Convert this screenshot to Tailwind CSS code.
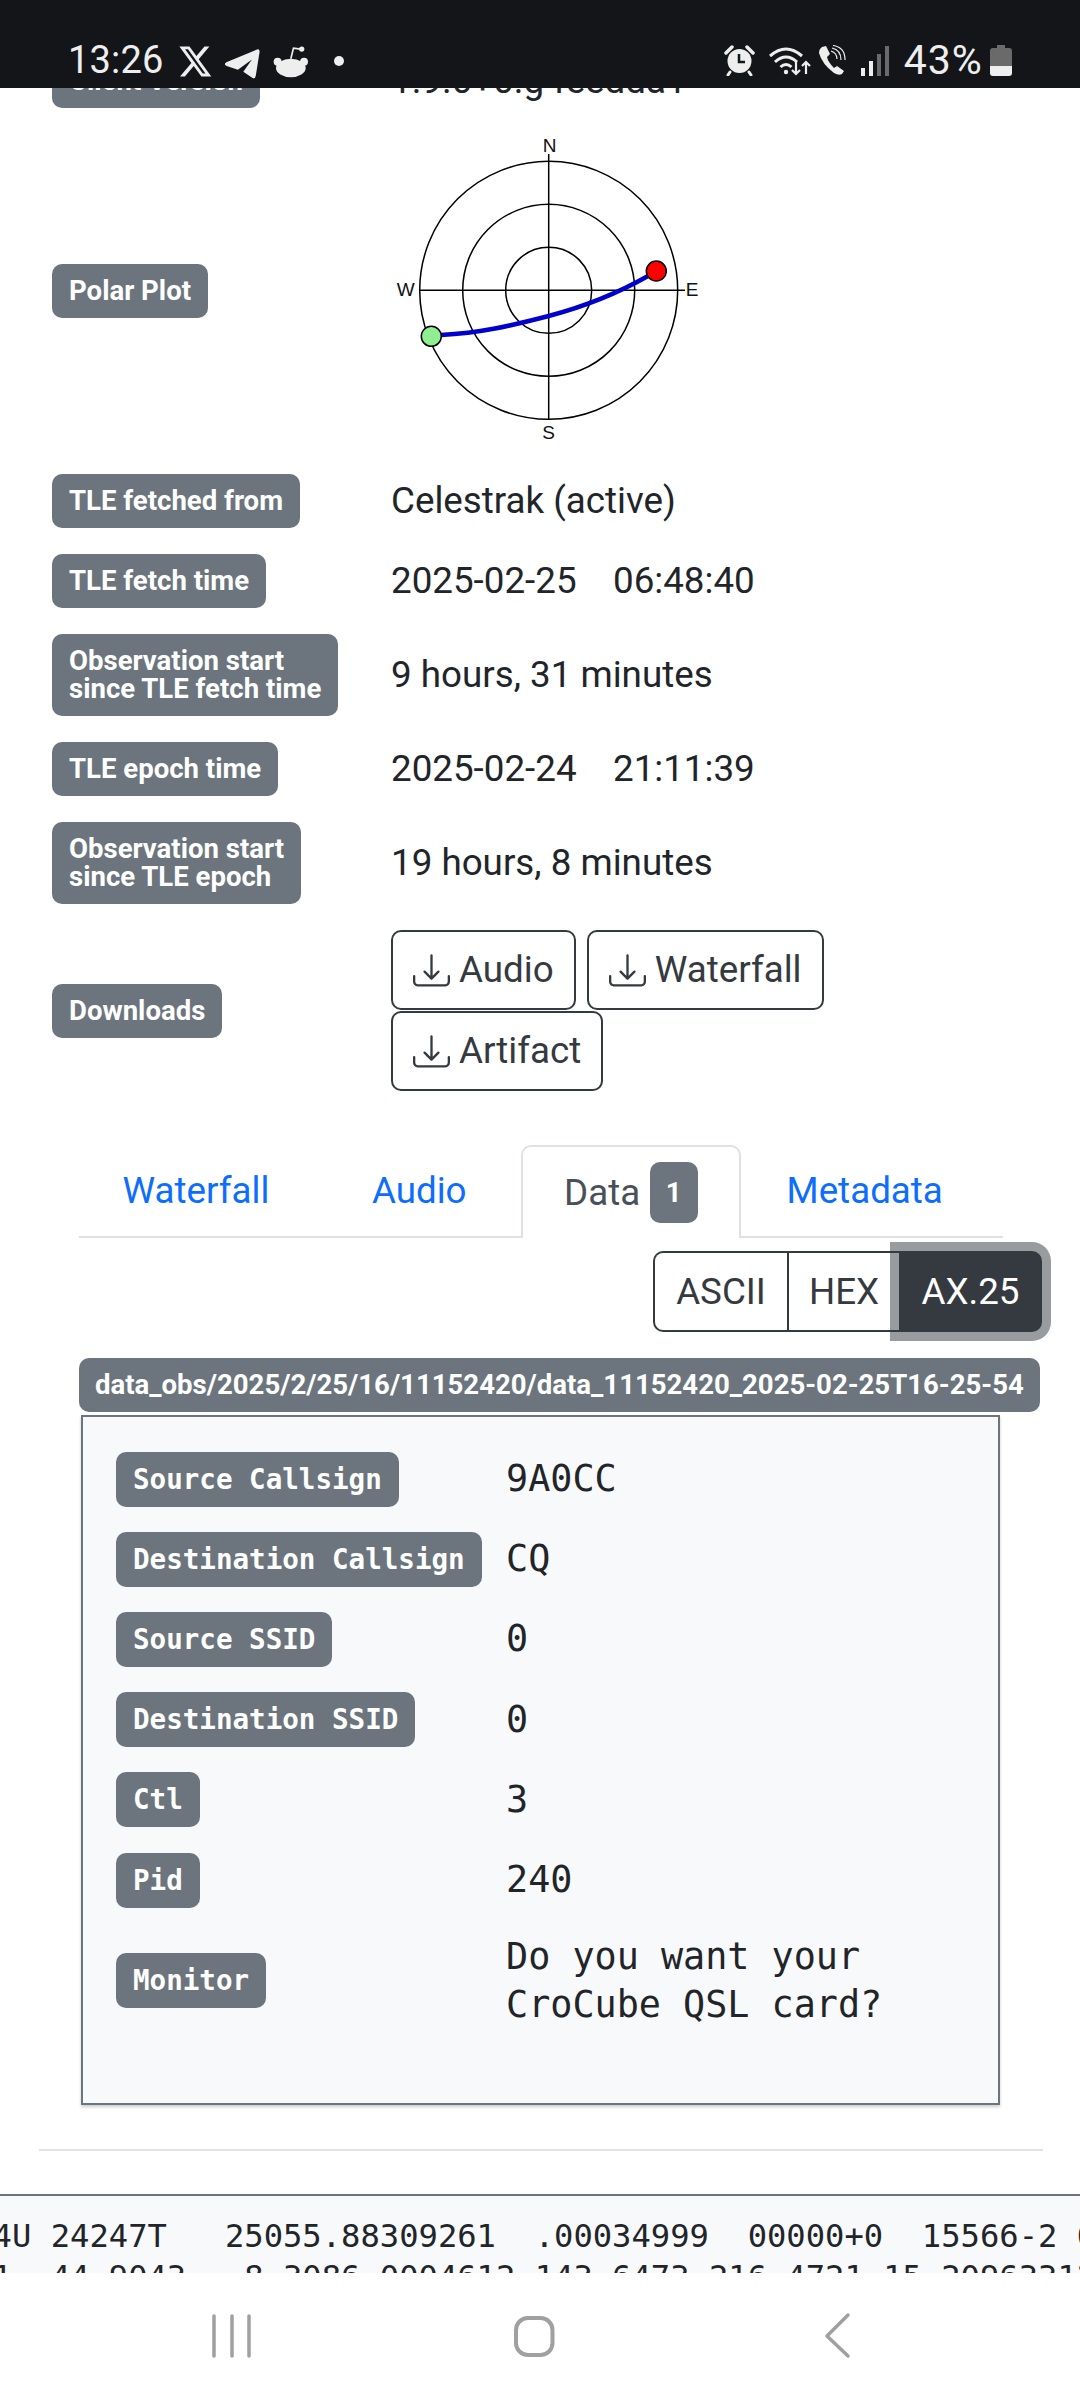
<!DOCTYPE html>
<html lang="en">
<head>
    <meta charset="UTF-8">
    <meta name="viewport" content="width=device-width, initial-scale=1.0">
    <title>Observation</title>
    <script src="https://cdn.jsdelivr.net/npm/@tailwindcss/browser@4"></script>
</head>
<body class="bg-white text-[#212529] font-['Roboto',sans-serif]">
<div class="w-[1080px] h-[2400px] flex flex-col overflow-hidden">

    <!-- Status bar -->
    <div class="relative z-10 h-[88px] shrink-0 bg-[#131519] text-[#eeeeee] flex items-start">
        <span class="ml-[68px] mt-[38px] text-[38px] leading-[44px] tracking-[0.2px]">13:26</span>
        <svg class="ml-[15px] mt-[46px] w-[34px] h-[31px]" viewBox="1 2 23 20" preserveAspectRatio="none" fill="#eeeeee"><path d="M18.244 2.25h3.308l-7.227 8.26 8.502 11.24H16.17l-5.214-6.817L4.99 21.75H1.68l7.73-8.835L1.254 2.25H8.08l4.713 6.231zm-1.161 17.52h1.833L7.084 4.126H5.117z"/></svg>
        <svg class="ml-[11px] mt-[47px] w-[37px] h-[32px]" viewBox="525 45 115 100" fill="#eeeeee"><path d="M630 52 L532 93 Q522 100 533 104 L568 116 L612 84 L585 122 L614 142 Q622 146 624 135 L636 60 Q636 50 630 52 Z"/></svg>
        <svg class="ml-[11px] mt-[44px] w-[38px] h-[35px]" viewBox="665 40 115 105" fill="#eeeeee"><ellipse cx="722" cy="112" rx="45" ry="28"/><circle cx="682" cy="93" r="12"/><circle cx="762" cy="93" r="12"/><path d="M722 84 L730 52 L752 55" fill="none" stroke="#eeeeee" stroke-width="5"/><circle cx="755" cy="55" r="8"/></svg>
        <span class="ml-[24px] mt-[56px] w-[10px] h-[10px] rounded-full bg-[#eeeeee]"></span>

        <svg class="ml-[380px] mt-[45px] w-[31px] h-[31px]" viewBox="0 0 31 31"><circle cx="15.500" cy="16" r="12" fill="#eeeeee"/><path d="M2 8 L8 2 M29 8 L23 2" stroke="#eeeeee" stroke-width="3.500" stroke-linecap="round"/><path d="M6 27 L4 30 M25 27 L27 30" stroke="#eeeeee" stroke-width="3" stroke-linecap="round"/><path d="M15 9 V17 H21" fill="none" stroke="#131519" stroke-width="2.500"/></svg>
        <svg class="ml-[13px] mt-[46px] w-[44px] h-[30px]" viewBox="0 0 44 30" fill="none" stroke="#eeeeee"><path d="M2 10 Q18 -4 34 10" stroke-width="3"/><path d="M7 16 Q18 6 29 16" stroke-width="3"/><path d="M12.500 21 Q18 16 23.500 21" stroke-width="3"/><circle cx="18" cy="26" r="2.200" fill="#eeeeee" stroke="none"/><path d="M28 15 V28 M24 24 L28 28 L32 24" stroke-width="2.200"/><path d="M38 28 V16 M34 20 L38 16 L42 20" stroke-width="2.200"/></svg>
        <svg class="ml-[5px] mt-[45px] w-[30px] h-[31px]" viewBox="0 0 30 31"><path d="M5 2 L9 1 L13 9 L10 12 Q11 17 17 23 L20 21 L27 26 L25 29 Q22 31 17 28 Q5 19 2 8 Q2 4 5 2 Z" fill="#eeeeee"/><path d="M15 3 Q24 5 24 15 M16 0.500 Q28 2 28 15 M14 6 Q20 8 20 14" fill="none" stroke="#eeeeee" stroke-width="1.200"/></svg>
        <svg class="ml-[14px] mt-[46px] w-[29px] h-[30px]" viewBox="0 0 29 30"><rect x="0" y="22" width="4" height="8" fill="#eeeeee"/><rect x="8" y="15" width="4" height="15" fill="#eeeeee"/><rect x="16" y="8" width="4" height="22" fill="#6a6a6a"/><rect x="24" y="0" width="4" height="30" fill="#6a6a6a"/></svg>
        <span class="ml-[14px] mt-[38px] text-[41px] leading-[44px] tracking-[1px]">43%</span>
        <svg class="ml-[7px] mt-[45px] w-[22px] h-[31px]" viewBox="0 0 22 31"><path d="M7 0 H15 V3 H19 Q22 3 22 6 V21 H0 V6 Q0 3 3 3 H7 Z" fill="#6a6a6a"/><path d="M0 21 H22 V28 Q22 31 19 31 H3 Q0 31 0 28 Z" fill="#eeeeee"/></svg>
    </div>

    <!-- Page -->
    <div class="flex-1 min-h-0 overflow-hidden">
        <div class="mt-[-47px]">
            <dl class="px-[52px] grid grid-cols-[339px_1fr] items-center">
                <div class="col-span-2 grid grid-cols-subgrid items-center py-[13px]">
                    <dt class="justify-self-start bg-[#6c757d] text-white font-bold text-[27.560px] leading-[28px] px-[17px] py-[13px] rounded-[10px]">Client Version</dt>
                    <dd class="text-[36.750px] leading-[54px]">1.9.0+0.g feedda1</dd>
                </div>
                <div class="col-span-2 grid grid-cols-subgrid items-center h-[340px]">
                    <dt class="justify-self-start bg-[#6c757d] text-white font-bold text-[27.560px] leading-[28px] px-[17px] py-[13px] rounded-[10px]">Polar Plot</dt>
                    <dd>
                        <svg class="block ml-px w-[340px] h-[340px]" viewBox="392 121 340 340" fill="none" stroke="#000000" stroke-width="1.500">
                            <circle cx="548.700" cy="290.300" r="129"/>
                            <circle cx="548.700" cy="290.300" r="86"/>
                            <circle cx="548.700" cy="290.300" r="43"/>
                            <path d="M419 290.300 H685 M548.700 154 V420"/>
                            <path d="M441 335 C 480 333 510 326 548.700 316 C 590 305 620 292 648 276" stroke="#0000cc" stroke-width="4.500"/>
                            <circle cx="656.300" cy="271" r="10" fill="#ff0000"/>
                            <circle cx="431.300" cy="336.300" r="10" fill="#90ee90"/>
                            <g fill="#111111" stroke="none" font-family="'Liberation Sans',sans-serif" font-size="19" text-anchor="middle">
                                <text x="549.500" y="152">N</text>
                                <text x="405.700" y="296">W</text>
                                <text x="692" y="296">E</text>
                                <text x="548.700" y="439">S</text>
                            </g>
                        </svg>
                    </dd>
                </div>
                <div class="col-span-2 grid grid-cols-subgrid items-center py-[13px]">
                    <dt class="justify-self-start bg-[#6c757d] text-white font-bold text-[27.560px] leading-[28px] px-[17px] py-[13px] rounded-[10px]">TLE fetched from</dt>
                    <dd class="text-[36.750px] leading-[54px]">Celestrak (active)</dd>
                </div>
                <div class="col-span-2 grid grid-cols-subgrid items-center py-[13px]">
                    <dt class="justify-self-start bg-[#6c757d] text-white font-bold text-[27.560px] leading-[28px] px-[17px] py-[13px] rounded-[10px]">TLE fetch time</dt>
                    <dd class="text-[36.750px] leading-[54px] whitespace-pre">2025-02-25    06:48:40</dd>
                </div>
                <div class="col-span-2 grid grid-cols-subgrid items-center py-[13px]">
                    <dt class="justify-self-start bg-[#6c757d] text-white font-bold text-[27.560px] leading-[28px] px-[17px] py-[13px] rounded-[10px]">Observation start<br>since TLE fetch time</dt>
                    <dd class="text-[36.750px] leading-[54px]">9 hours, 31 minutes</dd>
                </div>
                <div class="col-span-2 grid grid-cols-subgrid items-center py-[13px]">
                    <dt class="justify-self-start bg-[#6c757d] text-white font-bold text-[27.560px] leading-[28px] px-[17px] py-[13px] rounded-[10px]">TLE epoch time</dt>
                    <dd class="text-[36.750px] leading-[54px] whitespace-pre">2025-02-24    21:11:39</dd>
                </div>
                <div class="col-span-2 grid grid-cols-subgrid items-center py-[13px]">
                    <dt class="justify-self-start bg-[#6c757d] text-white font-bold text-[27.560px] leading-[28px] px-[17px] py-[13px] rounded-[10px]">Observation start<br>since TLE epoch</dt>
                    <dd class="text-[36.750px] leading-[54px]">19 hours, 8 minutes</dd>
                </div>
                <div class="col-span-2 grid grid-cols-subgrid items-center py-[13px]">
                    <dt class="justify-self-start bg-[#6c757d] text-white font-bold text-[27.560px] leading-[28px] px-[17px] py-[13px] rounded-[10px]">Downloads</dt>
                    <dd class="flex flex-wrap gap-x-[11px] gap-y-px text-[36.750px] leading-[54px] text-[#343a40]">
                        <a class="h-[80px] flex items-center gap-[9px] px-[20px] border-2 border-[#343a40] rounded-[10px]">
                            <svg class="w-[37px] h-[37px]" viewBox="0 0 16 16" fill="#343a40"><path d="M.5 9.900a.5.5 0 0 1 .5.500v2.500a1 1 0 0 0 1 1h12a1 1 0 0 0 1-1v-2.500a.5.5 0 0 1 1 0v2.500a2 2 0 0 1-2 2H2a2 2 0 0 1-2-2v-2.500a.5.5 0 0 1 .5-.5z"/><path d="M7.646 11.854a.5.5 0 0 0 .708 0l3-3a.5.5 0 0 0-.708-.708L8.500 10.293V1.500a.5.5 0 0 0-1 0v8.793L5.354 8.146a.5.5 0 1 0-.708.708l3 3z"/></svg>Audio</a>
                        <a class="h-[80px] flex items-center gap-[9px] px-[20px] border-2 border-[#343a40] rounded-[10px]">
                            <svg class="w-[37px] h-[37px]" viewBox="0 0 16 16" fill="#343a40"><path d="M.5 9.900a.5.5 0 0 1 .5.500v2.500a1 1 0 0 0 1 1h12a1 1 0 0 0 1-1v-2.500a.5.5 0 0 1 1 0v2.500a2 2 0 0 1-2 2H2a2 2 0 0 1-2-2v-2.500a.5.5 0 0 1 .5-.5z"/><path d="M7.646 11.854a.5.5 0 0 0 .708 0l3-3a.5.5 0 0 0-.708-.708L8.500 10.293V1.500a.5.5 0 0 0-1 0v8.793L5.354 8.146a.5.5 0 1 0-.708.708l3 3z"/></svg>Waterfall</a>
                        <a class="h-[80px] flex items-center gap-[9px] px-[20px] border-2 border-[#343a40] rounded-[10px]">
                            <svg class="w-[37px] h-[37px]" viewBox="0 0 16 16" fill="#343a40"><path d="M.5 9.900a.5.5 0 0 1 .5.500v2.500a1 1 0 0 0 1 1h12a1 1 0 0 0 1-1v-2.500a.5.5 0 0 1 1 0v2.500a2 2 0 0 1-2 2H2a2 2 0 0 1-2-2v-2.500a.5.5 0 0 1 .5-.5z"/><path d="M7.646 11.854a.5.5 0 0 0 .708 0l3-3a.5.5 0 0 0-.708-.708L8.500 10.293V1.500a.5.5 0 0 0-1 0v8.793L5.354 8.146a.5.5 0 1 0-.708.708l3 3z"/></svg>Artifact</a>
                    </dd>
                </div>
            </dl>

            <!-- Tabs -->
            <div class="mt-[41px] ml-[79px] w-[924px] h-[93px] border-b-2 border-[#dee2e6] flex text-[36.750px] text-[#0d6efd]">
                <a class="ml-[43.500px] h-[91px] flex items-center">Waterfall</a>
                <a class="ml-[102.500px] h-[91px] flex items-center">Audio</a>
                <a class="ml-[54px] h-[93px] w-[220px] pl-[41.500px] flex items-center gap-[9.500px] bg-white border-2 border-b-0 border-[#dee2e6] rounded-t-[10px] text-[#495057]">Data<span class="w-[48px] h-[61px] flex items-center justify-center rounded-[10px] bg-[#6c757d] text-white font-bold text-[27.560px]">1</span></a>
                <a class="ml-[46px] h-[91px] flex items-center">Metadata</a>
            </div>

            <!-- Format switch -->
            <div class="mt-[13px] ml-[653px] w-[389px] h-[81px] flex text-[36.750px] text-[#343a40]">
                <a class="w-[134px] flex items-center justify-center border-2 border-r-0 border-[#343a40] rounded-l-[10px]">ASCII</a>
                <a class="w-[112px] flex items-center justify-center border-2 border-r-0 border-[#343a40]">HEX</a>
                <a class="w-[143px] flex items-center justify-center bg-[#343a40] text-white rounded-r-[10px] shadow-[0_0_0_9px_rgba(52,58,64,0.5)]">AX.25</a>
            </div>

            <!-- Data block -->
            <div class="mt-[26px] ml-[79px] w-[961px] bg-[#6c757d] text-white font-bold text-[27.560px] leading-[28px] px-[16px] py-[13px] rounded-[10px] whitespace-nowrap">data_obs/2025/2/25/16/11152420/data_11152420_2025-02-25T16-25-54</div>
            <div class="mt-[3px] ml-[81px] w-[919px] h-[690px] border-2 border-[#6c757d] bg-[#f8f9fa] pt-[22px] pl-[33px] shadow-[0_2px_3px_rgba(0,0,0,0.2)] font-['DejaVu_Sans_Mono',monospace]">
                <dl class="grid grid-cols-[390px_1fr] items-center">
                    <div class="col-span-2 grid grid-cols-subgrid items-center py-[12.600px]">
                        <dt class="justify-self-start bg-[#6c757d] text-white font-bold text-[27.560px] leading-[29px] px-[17px] py-[13px] rounded-[10px]">Source Callsign</dt>
                        <dd class="text-[36.750px] leading-[48px]">9A0CC</dd>
                    </div>
                    <div class="col-span-2 grid grid-cols-subgrid items-center py-[12.600px]">
                        <dt class="justify-self-start bg-[#6c757d] text-white font-bold text-[27.560px] leading-[29px] px-[17px] py-[13px] rounded-[10px]">Destination Callsign</dt>
                        <dd class="text-[36.750px] leading-[48px]">CQ</dd>
                    </div>
                    <div class="col-span-2 grid grid-cols-subgrid items-center py-[12.600px]">
                        <dt class="justify-self-start bg-[#6c757d] text-white font-bold text-[27.560px] leading-[29px] px-[17px] py-[13px] rounded-[10px]">Source SSID</dt>
                        <dd class="text-[36.750px] leading-[48px]">0</dd>
                    </div>
                    <div class="col-span-2 grid grid-cols-subgrid items-center py-[12.600px]">
                        <dt class="justify-self-start bg-[#6c757d] text-white font-bold text-[27.560px] leading-[29px] px-[17px] py-[13px] rounded-[10px]">Destination SSID</dt>
                        <dd class="text-[36.750px] leading-[48px]">0</dd>
                    </div>
                    <div class="col-span-2 grid grid-cols-subgrid items-center py-[12.600px]">
                        <dt class="justify-self-start bg-[#6c757d] text-white font-bold text-[27.560px] leading-[29px] px-[17px] py-[13px] rounded-[10px]">Ctl</dt>
                        <dd class="text-[36.750px] leading-[48px]">3</dd>
                    </div>
                    <div class="col-span-2 grid grid-cols-subgrid items-center py-[12.600px]">
                        <dt class="justify-self-start bg-[#6c757d] text-white font-bold text-[27.560px] leading-[29px] px-[17px] py-[13px] rounded-[10px]">Pid</dt>
                        <dd class="text-[36.750px] leading-[48px]">240</dd>
                    </div>
                    <div class="col-span-2 grid grid-cols-subgrid items-center py-[12.600px]">
                        <dt class="justify-self-start bg-[#6c757d] text-white font-bold text-[27.560px] leading-[29px] px-[17px] py-[13px] rounded-[10px]">Monitor</dt>
                        <dd class="text-[36.750px] leading-[48px]">Do you want your<br>CroCube QSL card?</dd>
                    </div>
                </dl>
            </div>

            <hr class="mt-[44px] ml-[39px] w-[1004px] border-t-2 border-[#e2e3e5]">

            <!-- TLE dump -->
            <div class="mt-[43px] h-[90px] border-t-2 border-[#6c757d] bg-[#f8f9fa] pt-[20px] overflow-hidden">
                <pre class="ml-[-7.400px] font-['DejaVu_Sans_Mono',monospace] text-[32.160px] leading-[41px]">4U 24247T   25055.88309261  .00034999  00000+0  15566-2 0  9997
1  44.9043   8.3086 0004612 143.6473 216.4721 15.20963312   123</pre>
            </div>
        </div>
    </div>

    <!-- Android nav bar -->
    <div class="relative z-10 h-[127px] shrink-0 bg-white">
        <svg class="w-[1080px] h-[127px]" viewBox="0 2273 1080 127" fill="none" stroke="#a0a0a0">
            <path d="M214 2316 V2356 M232 2316 V2356 M249 2316 V2356" stroke-width="3.500" stroke-linecap="round"/>
            <rect x="516" y="2318" width="36.500" height="37" rx="12" stroke-width="4"/>
            <path d="M848 2315 L827 2336 L848 2356" stroke-width="3.500" stroke-linecap="round" stroke-linejoin="round"/>
        </svg>
    </div>
</div>
</body>
</html>
